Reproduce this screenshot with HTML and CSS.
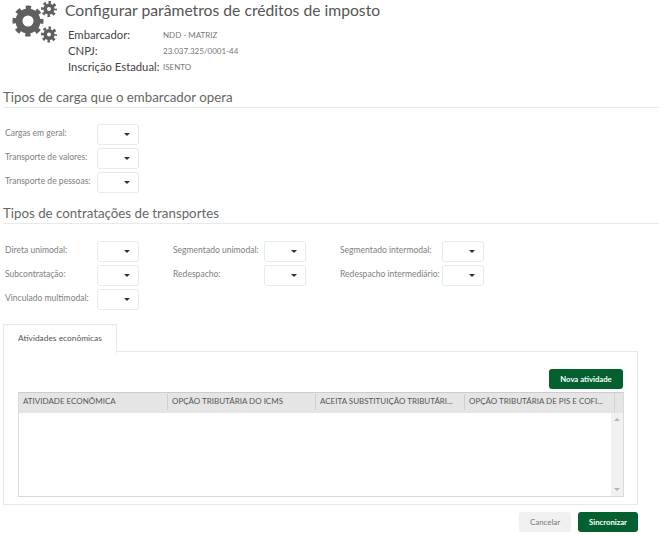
FILE: index.html
```html
<!DOCTYPE html>
<html lang="pt-BR">

<head>
  <meta charset="UTF-8">
  <title>Configurar parâmetros de créditos de imposto</title>
  <link rel="stylesheet" href="styles.css">
</head>

<body>

  <!-- Header -->
  <div class="header">
    <svg class="gears" width="65" height="48" viewBox="0 0 65 48" fill="none" stroke="#5f5f5f">
      <circle cx="28" cy="21" r="9" stroke-width="7"/>
      <circle cx="28" cy="21" r="13.5" stroke-width="4" stroke-dasharray="5.3 5.3" stroke-dashoffset="2.65"/>
      <circle cx="49" cy="9" r="3.8" stroke-width="3.6"/>
      <circle cx="49" cy="9" r="6.5" stroke-width="3" stroke-dasharray="2.55 2.55" stroke-dashoffset="1.27"/>
      <circle cx="49" cy="34.5" r="3.8" stroke-width="3.6"/>
      <circle cx="49" cy="34.5" r="6.5" stroke-width="3" stroke-dasharray="2.55 2.55" stroke-dashoffset="1.27"/>
    </svg>
    <div class="header-text">
      <h1 class="title">Configurar parâmetros de créditos de imposto</h1>
      <div class="info">
        <div class="info-row"><span class="info-key">Embarcador:</span><span class="info-value">NDD - MATRIZ</span></div>
        <div class="info-row"><span class="info-key">CNPJ:</span><span class="info-value">23.037.325/0001-44</span></div>
        <div class="info-row"><span class="info-key">Inscrição Estadual:</span><span class="info-value">ISENTO</span></div>
      </div>
    </div>
  </div>

  <h2 class="section-title section-first">Tipos de carga que o embarcador opera</h2>
  <div class="form-grid form-grid-single">
    <div class="field"><label>Cargas em geral:</label><div class="combo"></div></div>
    <div class="field"><label>Transporte de valores:</label><div class="combo"></div></div>
    <div class="field"><label>Transporte de pessoas:</label><div class="combo"></div></div>
  </div>

  <h2 class="section-title">Tipos de contratações de transportes</h2>
  <div class="form-grid">
    <div class="field"><label>Direta unimodal:</label><div class="combo"></div></div>
    <div class="field"><label>Segmentado unimodal:</label><div class="combo"></div></div>
    <div class="field"><label>Segmentado intermodal:</label><div class="combo"></div></div>
    <div class="field"><label>Subcontratação:</label><div class="combo"></div></div>
    <div class="field"><label>Redespacho:</label><div class="combo"></div></div>
    <div class="field"><label>Redespacho intermediário:</label><div class="combo"></div></div>
    <div class="field"><label>Vinculado multimodal:</label><div class="combo"></div></div>
  </div>

  <!-- Tabs -->
  <div class="tabs">
    <div class="tab">Atividades econômicas</div>
    <div class="tab-line"></div>
  </div>
  <div class="panel">
    <div class="panel-actions">
      <button class="btn btn-green btn-new">Nova atividade</button>
    </div>
    <div class="grid">
      <div class="grid-head">
        <div class="col col-1">ATIVIDADE ECONÔMICA</div>
        <div class="col col-2">OPÇÃO TRIBUTÁRIA DO ICMS</div>
        <div class="col col-3">ACEITA SUBSTITUIÇÃO TRIBUTÁRI...</div>
        <div class="col col-4">OPÇÃO TRIBUTÁRIA DE PIS E COFI...</div>
        <div class="col-end"></div>
      </div>
      <div class="grid-body">
        <div class="rows"></div>
        <div class="scrollbar">
          <span class="arrow arrow-up"></span>
          <span class="arrow arrow-down"></span>
        </div>
      </div>
    </div>
  </div>

  <div class="footer">
    <button class="btn btn-grey">Cancelar</button>
    <button class="btn btn-green btn-sync">Sincronizar</button>
  </div>

</body>

</html>
```

FILE: styles.css
```css
/* General */
body {
  margin: 0;
  width: 661px;
  height: 535px;
  overflow: hidden;
  background: #fff;
  color: #666;
  font-family: 'Lato', sans-serif;
}

/* Header */
.header {
  display: flex;
  height: 77px;
}

.gears {
  flex: none;
}

.title {
  margin: 0;
  font-size: 15.7px;
  line-height: 20px;
  font-weight: 400;
  color: #555;
}

.info {
  margin: 6px 0 0 3px;
}

.info-row {
  display: flex;
  align-items: center;
  height: 16px;
}

.info-key {
  width: 95px;
  font-size: 11.3px;
  color: #444;
  white-space: nowrap;
}

.info-value {
  padding-top: 1px;
  font-size: 8px;
  color: #777;
}

/* Sections */
.section-title {
  margin: 11px 2px 17px 3px;
  padding-bottom: 1px;
  border-bottom: 1px solid #e6eaea;
  font-size: 13.3px;
  line-height: 18px;
  font-weight: 400;
  color: #666;
}

.section-first {
  margin-bottom: 16px;
}

/* Form fields */
.form-grid {
  display: grid;
  grid-template-columns: 134px 133px 144px;
  column-gap: 34px;
  row-gap: 3px;
  padding-left: 5px;
}

.form-grid-single {
  grid-template-columns: 134px;
}

.field {
  display: flex;
  justify-content: space-between;
  height: 21px;
}

.field label {
  font-size: 8.55px;
  line-height: 18px;
  color: #808080;
  white-space: nowrap;
}

.combo {
  position: relative;
  flex: none;
  box-sizing: border-box;
  width: 42px;
  height: 21px;
  border: 1px solid #e4ecee;
  border-radius: 3px;
  background: #fff;
}

.combo::after {
  content: "";
  position: absolute;
  top: 8px;
  right: 8px;
  border-left: 3px solid transparent;
  border-right: 3px solid transparent;
  border-top: 3px solid #333;
}

/* Tabs */
.tabs {
  display: flex;
  margin: 14px 0 0 3px;
  height: 28px;
  width: 635px;
}

.tab {
  box-sizing: border-box;
  width: 114px;
  height: 29px;
  padding-left: 14px;
  border: 1px solid #e6eaea;
  border-bottom: 0;
  background: #fff;
  font-size: 8.4px;
  line-height: 27px;
  color: #555;
  white-space: nowrap;
}

.tab-line {
  flex: 1;
  border-bottom: 1px solid #e6eaea;
}

.panel {
  box-sizing: border-box;
  width: 635px;
  height: 153px;
  margin-left: 3px;
  padding: 17px 12px 0 14px;
  border: 1px solid #e6eaea;
  border-top: 0;
}

.panel-actions {
  display: flex;
  justify-content: flex-end;
  height: 23px;
  padding-right: 2px;
}

/* Buttons */
.btn {
  border: 0;
  border-radius: 3px;
  padding: 0;
  font-family: 'Lato', sans-serif;
  font-size: 7.9px;
}

.btn-green {
  background: #04602f;
  color: #fff;
  font-size: 7.7px;
  font-weight: 700;
}

.btn-grey {
  width: 52px;
  background: #f0f0f0;
  color: #777;
}

.btn-new {
  width: 74px;
  height: 20px;
}

.btn-sync {
  width: 60px;
}

/* Grid */
.grid {
  box-sizing: border-box;
  width: 606px;
  height: 105px;
  border: 1px solid #d9d9d9;
  border-top-color: #ccc;
}

.grid-head {
  display: flex;
  height: 20px;
  background: #e5e5e5;
}

.col {
  box-sizing: border-box;
  height: 16px;
  margin-top: 1px;
  padding-left: 4px;
  border-right: 1px solid #cfcfcf;
  font-size: 8px;
  line-height: 15px;
  color: #555;
  white-space: nowrap;
}

.col-1 {
  width: 149px;
}

.col-2 {
  width: 148px;
}

.col-3,
.col-4 {
  width: 149px;
}

.col-end {
  flex: 1;
  border-left: 1px solid #d4d4d4;
}

.col-4 {
  border-right: 0;
}

.grid-body {
  display: flex;
  height: 83px;
}

.rows {
  flex: 1;
}

.scrollbar {
  display: flex;
  flex-direction: column;
  justify-content: space-between;
  align-items: center;
  box-sizing: border-box;
  width: 12px;
  padding: 5px 0;
  background: #f1f1f1;
}

.arrow {
  border-left: 3px solid transparent;
  border-right: 3px solid transparent;
}

.arrow-up {
  border-bottom: 3px solid #b5b5b5;
}

.arrow-down {
  border-top: 3px solid #b5b5b5;
}

/* Footer */
.footer {
  display: flex;
  justify-content: flex-end;
  gap: 7px;
  width: 638px;
  height: 20px;
  margin-top: 7px;
}
```
